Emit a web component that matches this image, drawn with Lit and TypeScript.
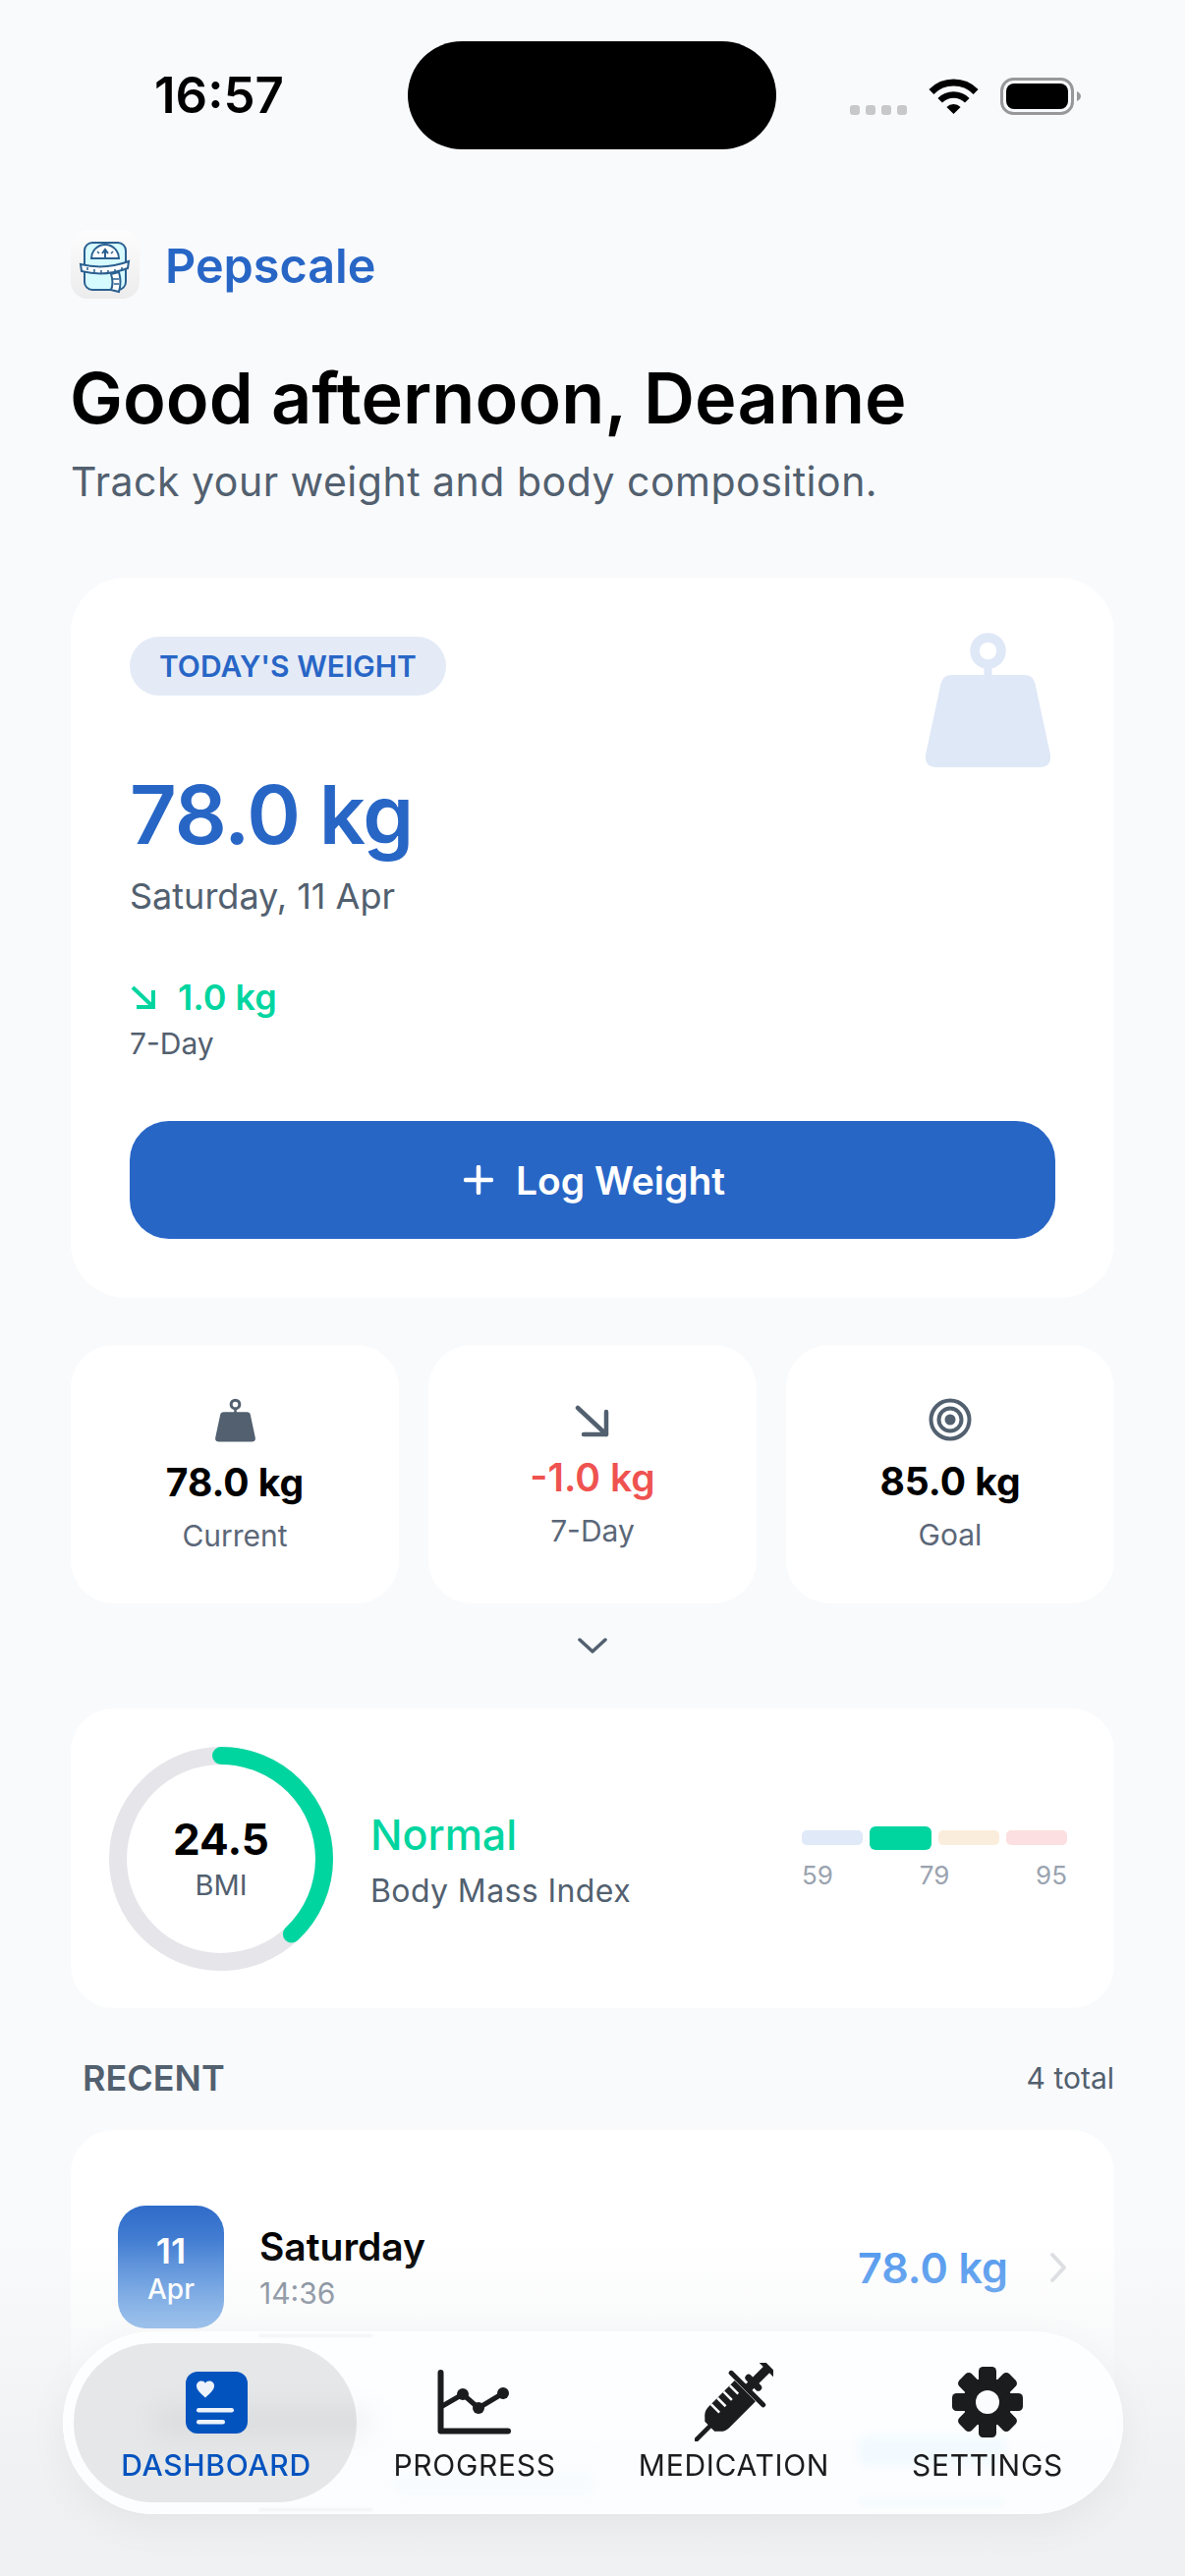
import { LitElement, html, css, svg } from 'lit';
import { customElement } from 'lit/decorators.js';

const weightIcon = (color: string, w: number, h: number) => html`
  <svg width=${w} height=${h} viewBox="0 0 128 137">
    <circle cx="64" cy="18.5" r="13.5" fill="none" stroke=${color} stroke-width="9.5" />
    <rect x="60" y="30" width="8" height="16" fill=${color} />
    <path
      d="M27 43H101Q110 43 112 52L127 122Q130 137 116 137H12Q-2 137 1 122L16 52Q18 43 27 43Z"
      fill=${color}
    />
  </svg>
`;

const dashboardIcon = html`
  <svg width="63" height="63" viewBox="0 0 63 63">
    <rect width="63" height="63" rx="12" fill="#0353bf" />
    <path d="M20 26.5C15 22 11 18.5 11 14.5C11 11 13.500 9.500 16 9.500C17.800 9.500 19.200 10.300 20 11.800C20.800 10.300 22.200 9.500 24 9.500C26.500 9.500 29 11 29 14.500C29 18.500 25 22 20 26.500Z" fill="#eef3fb" />
    <rect x="11" y="37" width="38" height="4.500" rx="2.250" fill="#eef3fb" />
    <rect x="11" y="49" width="29" height="4.500" rx="2.250" fill="#eef3fb" />
  </svg>
`;

const progressIcon = html`
  <svg width="76" height="66" viewBox="0 0 76 66" fill="none" stroke="#1a1c1d" stroke-linecap="round" stroke-linejoin="round">
    <path d="M3.500 3V62.500H72" stroke-width="6" />
    <path d="M3.500 38L26 25L42 39L67 24" stroke-width="5" />
    <circle cx="26" cy="25" r="6" fill="#1a1c1d" stroke="none" />
    <circle cx="42" cy="39" r="6" fill="#1a1c1d" stroke="none" />
    <circle cx="67" cy="24" r="6" fill="#1a1c1d" stroke="none" />
  </svg>
`;

const syringeIcon = html`
  <svg width="80" height="80" viewBox="0 0 80 80" fill="none">
    <g transform="rotate(45 40 40)">
      <path d="M40 94V70" stroke="#1a1c1d" stroke-width="4.500" stroke-linecap="round" />
      <path d="M25 24H55V62Q55 68 50 72L47 75H33L30 72Q25 68 25 62Z" fill="#1a1c1d" />
      <path d="M25 31H37M25 40H37M25 49H37M25 58H37" stroke="#fbfcfd" stroke-width="2.500" />
      <path d="M17 21H63" stroke="#1a1c1d" stroke-width="5" stroke-linecap="round" />
      <path d="M40 20V-8" stroke="#1a1c1d" stroke-width="9" />
      <path d="M27 -9H53" stroke="#1a1c1d" stroke-width="5" stroke-linecap="round" />
      <path d="M33 12H47" stroke="#1a1c1d" stroke-width="7" stroke-linecap="round" />
    </g>
  </svg>
`;

const gearIcon = html`
  <svg width="72" height="72" viewBox="0 0 72 72">
    <circle cx="36" cy="36" r="25" fill="#1a1c1d" />
    ${[0, 45, 90, 135, 180, 225, 270, 315].map(
      a => svg`<rect x="27" y="0" width="18" height="18" rx="4.500" fill="#1a1c1d" transform="rotate(${a} 36 36)" />`,
    )}
    <circle cx="36" cy="36" r="12" fill="#fbfcfd" />
  </svg>
`;

const logoIcon = html`
  <svg width="70" height="70" viewBox="0 0 70 70">
    <defs>
      <linearGradient id="tile" x1="0" y1="0" x2="0" y2="1">
        <stop offset="0" stop-color="#fdfdfd" />
        <stop offset="1" stop-color="#ececec" />
      </linearGradient>
    </defs>
    <rect width="70" height="70" rx="17" fill="url(#tile)" />
    <g stroke="#2b6090" stroke-width="2" fill="none">
      <rect x="14" y="13" width="42" height="48" rx="8" fill="#d6fbff" />
      <path d="M21 29A14 14 0 0 1 49 29Z" fill="#fff" />
      <path d="M35 29V21M32 24L35 20L38 24" />
      <path d="M27 22L29 24M43 22L41 24" stroke-width="1.500" />
      <path d="M10 35Q35 41 59 32L58 39Q35 48 11 42Z" fill="#fff" />
      <path d="M17 38V41M24 40V43M31 41V44M38 41V44M45 40V43M52 38V41" stroke-width="1.500" />
      <path d="M41 45Q44 54 41 61L49 63Q52 53 49 43Z" fill="#fff" />
      <path d="M43 50H49M44 55H49" stroke-width="1.500" />
    </g>
  </svg>
`;

const NAV = [
  { label: 'DASHBOARD', icon: dashboardIcon, active: true },
  { label: 'PROGRESS', icon: progressIcon, active: false },
  { label: 'MEDICATION', icon: syringeIcon, active: false },
  { label: 'SETTINGS', icon: gearIcon, active: false },
];

// smudges of the list row that shows, blurred, through the glass nav
const GHOSTS = [
  { left: 92, top: 74, width: 225, height: 36, color: 'rgba(0, 0, 0, 0.035)', blur: 12 },
  { left: 336, top: 144, width: 206, height: 23, color: 'rgba(130, 200, 255, 0.04)', blur: 6 },
  { left: 809, top: 107, width: 150, height: 30, color: 'rgba(120, 215, 255, 0.07)', blur: 4 },
  { left: 809, top: 169, width: 150, height: 10, color: 'rgba(120, 215, 255, 0.05)', blur: 3 },
  { left: 199, top: 3, width: 117, height: 3, color: 'rgba(0, 0, 0, 0.04)', blur: 1 },
  { left: 199, top: 180, width: 117, height: 3, color: 'rgba(0, 0, 0, 0.04)', blur: 1 },
];

@customElement('app-root')
export class AppRoot extends LitElement {
  static styles = css`
    :host {
      display: block;
      position: relative;
      width: 1206px;
      height: 2622px;
      overflow: hidden;
      background: #f9fafc;
      color: #000;
      font-family: Inter, 'Noto Sans', sans-serif;
    }

    .status {
      display: flex;
      align-items: flex-start;
      height: 110px;
      padding: 42px 0 0 157px;
    }

    .time {
      width: 258px;
      margin-top: 25px;
      font-size: 51px;
      line-height: 60px;
      font-weight: 600;
    }

    .island {
      width: 375px;
      height: 110px;
      border-radius: 55px;
      background: #000;
    }

    .status-icons {
      display: flex;
      align-items: flex-end;
      height: 75px;
      margin-left: 75px;
    }

    .dots {
      display: flex;
      gap: 6px;
      margin-right: 22px;
    }

    .dots span {
      width: 10px;
      height: 10px;
      border-radius: 3px;
      background: #c8c8ca;
    }

    .battery {
      margin-left: 22px;
    }

    .page {
      padding: 82px 72px 0;
    }

    .brand {
      display: flex;
      align-items: center;
      gap: 26px;
      height: 70px;
      font-size: 48.500px;
      font-weight: 600;
      color: #2866c6;
    }

    .brand span {
      margin-top: 2px;
    }

    h1 {
      margin: 58px 0 0 -1px;
      font-size: 72px;
      line-height: 86px;
      font-weight: 600;
      letter-spacing: 0.05px;
    }

    .sub {
      margin-top: 17px;
      font-size: 41px;
      line-height: 50px;
      letter-spacing: 0.5px;
      color: #52606f;
    }

    .card {
      background: #fff;
    }

    .hero {
      position: relative;
      margin-top: 73px;
      padding: 60px 60px 60px;
      border-radius: 56px;
    }

    .badge {
      display: inline-flex;
      align-items: center;
      height: 60px;
      padding: 0 30px;
      border-radius: 30px;
      background: #e4ebf7;
      color: #2866c6;
      font-size: 30px;
      font-weight: 600;
    }

    .weight-art {
      position: absolute;
      top: 56px;
      right: 64px;
    }

    .big {
      margin-top: 71px;
      font-size: 83px;
      line-height: 100px;
      font-weight: 600;
      letter-spacing: -1px;
      color: #2866c6;
    }

    .date {
      margin-top: 11px;
      font-size: 36px;
      line-height: 44px;
      color: #52606f;
    }

    .delta {
      display: flex;
      align-items: center;
      gap: 21px;
      margin-top: 60px;
      font-size: 36px;
      line-height: 42px;
      font-weight: 600;
      color: #00d5a0;
    }

    .delta-label {
      margin-top: 8px;
      font-size: 30px;
      line-height: 36px;
      color: #52606f;
    }

    .log {
      display: flex;
      align-items: center;
      justify-content: center;
      gap: 23px;
      height: 120px;
      margin-top: 61px;
      padding-left: 4px;
      border-radius: 40px;
      background: #2866c6;
      color: #fff;
      font-size: 39px;
      font-weight: 600;
    }

    .stats {
      display: grid;
      grid-template-columns: repeat(3, 1fr);
      gap: 30px;
      margin-top: 48px;
    }

    .stat {
      display: flex;
      flex-direction: column;
      align-items: center;
      height: 263px;
      box-sizing: border-box;
      padding-top: 54px;
      border-radius: 44px;
    }

    .stat-icon {
      display: flex;
      align-items: center;
    }

    .stat-value {
      margin-top: 18px;
      font-size: 39px;
      line-height: 46px;
      font-weight: 700;
    }

    .stat-value.down {
      color: #ef5350;
      font-weight: 600;
    }

    .stat-label {
      margin-top: 13px;
      font-size: 30px;
      line-height: 36px;
      color: #5b6778;
    }

    .toggle {
      display: flex;
      justify-content: center;
      height: 72px;
      padding-top: 35px;
    }

    .bmi {
      display: flex;
      align-items: center;
      height: 305px;
      padding: 0 48px 0 39px;
      border-radius: 44px;
    }

    .ring {
      position: relative;
      width: 228px;
      height: 228px;
    }

    .ring-text {
      position: absolute;
      inset: 0;
      display: flex;
      flex-direction: column;
      align-items: center;
      justify-content: center;
    }

    .ring-value {
      font-size: 44px;
      line-height: 50px;
      font-weight: 700;
    }

    .ring-label {
      margin-top: 4px;
      font-size: 29px;
      line-height: 36px;
      color: #52606f;
    }

    .bmi-text {
      flex: 1;
      margin-left: 38px;
    }

    .bmi-status {
      margin-top: 3px;
      font-size: 43px;
      line-height: 52px;
      font-weight: 500;
      color: #00d5a0;
    }

    .bmi-name {
      margin-top: 12px;
      font-size: 32px;
      line-height: 40px;
      letter-spacing: 0.4px;
      color: #52606f;
    }

    .scale {
      width: 270px;
    }

    .bars {
      display: flex;
      align-items: center;
      gap: 7px;
      height: 24px;
    }

    .bars span {
      flex: 1;
      height: 15px;
      border-radius: 5px;
    }

    .bars .now {
      height: 24px;
      border-radius: 6px;
      background: #00d5a0;
    }

    .marks {
      display: flex;
      justify-content: space-between;
      margin-top: 10px;
      font-size: 26px;
      line-height: 32px;
      color: #9aa3af;
    }

    .recent {
      display: flex;
      align-items: center;
      justify-content: space-between;
      height: 44px;
      margin-top: 49px;
      padding-left: 12px;
      font-size: 30px;
      color: #52606f;
    }

    .recent b {
      font-size: 36px;
      font-weight: 600;
    }

    .list {
      margin-top: 31px;
      padding: 47px 48px 0;
      height: 600px;
      border-radius: 44px;
    }

    .row {
      display: flex;
      align-items: center;
      height: 185px;
      box-sizing: border-box;
    }

    .tile {
      display: flex;
      flex-direction: column;
      align-items: center;
      justify-content: center;
      width: 108px;
      height: 125px;
      border-radius: 28px;
      background: linear-gradient(#2f6cc9, #75abe9);
      color: #fff;
    }

    .tile b {
      font-size: 36px;
      line-height: 44px;
      font-weight: 600;
    }

    .tile span {
      font-size: 28px;
      line-height: 34px;
      font-weight: 500;
    }

    .row-main {
      flex: 1;
      margin-left: 36px;
    }

    .row-name {
      font-size: 39px;
      line-height: 46px;
      font-weight: 600;
    }

    .row-time {
      margin-top: 6px;
      font-size: 30px;
      line-height: 36px;
      color: #7b8694;
    }

    .row-value {
      font-size: 43px;
      font-weight: 600;
      color: #4f97ee;
    }

    .row-chevron {
      margin-left: 42px;
    }

    .rule {
      height: 2px;
      margin-left: 145px;
      background: #e6e8ea;
    }

    .fade {
      position: absolute;
      left: 0;
      right: 0;
      top: 2280px;
      bottom: 0;
      background: linear-gradient(rgba(240, 241, 243, 0), rgba(238, 240, 242, 0.96) 75%);
    }

    .nav {
      position: absolute;
      left: 64px;
      top: 2373px;
      display: grid;
      grid-template-columns: 312px 214px 314px 202px;
      width: 1079px;
      height: 186px;
      box-sizing: border-box;
      padding-top: 32px;
      border-radius: 93px;
      background: rgba(253, 254, 255, 0.92);
      -webkit-backdrop-filter: blur(6px);
      backdrop-filter: blur(6px);
      box-shadow:
        inset 0 0 0 1px rgba(255, 255, 255, 0.7),
        0 12px 40px rgba(0, 0, 0, 0.05);
    }

    .pill {
      position: absolute;
      left: 11px;
      top: 12px;
      width: 288px;
      height: 162px;
      border-radius: 81px;
      background: rgba(223, 224, 226, 0.78);
    }

    .ghost {
      position: absolute;
      border-radius: 6px;
    }

    .nav-item {
      position: relative;
      display: flex;
      flex-direction: column;
      align-items: center;
      font-size: 30px;
      line-height: 36px;
      font-weight: 400;
      letter-spacing: 0.7px;
      color: #1a1c1d;
    }

    .nav-item.active {
      color: #0353bf;
      font-weight: 500;
    }

    .nav-icon {
      display: flex;
      align-items: center;
      justify-content: center;
      height: 80px;
      margin-bottom: 6px;
    }
  `;

  render() {
    return html`
      <div class="status">
        <div class="time">16:57</div>
        <div class="island"></div>
        <div class="status-icons">
          <div class="dots"><span></span><span></span><span></span><span></span></div>
          <svg width="51" height="38" viewBox="0 0 51 38">
            <path d="M2.900 14.400A32 32 0 0 1 48.100 14.400" fill="none" stroke="#000" stroke-width="7" />
            <path d="M11.700 23.200A19.500 19.500 0 0 1 39.300 23.200" fill="none" stroke="#000" stroke-width="6.500" />
            <path d="M25.500 37L18.400 29.900A10 10 0 0 1 32.600 29.900Z" />
          </svg>
          <svg class="battery" width="82" height="38" viewBox="0 0 82 38">
            <rect x="1.500" y="1.500" width="72" height="35" rx="12" fill="none" stroke="#98989a" stroke-width="3" />
            <rect x="6" y="6" width="63" height="26" rx="8" />
            <path d="M78 14Q82 16 82 19Q82 22 78 24Z" fill="#98989a" />
          </svg>
        </div>
      </div>

      <div class="page">
        <div class="brand">${logoIcon}<span>Pepscale</span></div>
        <h1>Good afternoon, Deanne</h1>
        <div class="sub">Track your weight and body composition.</div>

        <div class="card hero">
          <div class="badge">TODAY'S WEIGHT</div>
          <div class="weight-art">${weightIcon('#dfe8f6', 129, 137)}</div>
          <div class="big">78.0 kg</div>
          <div class="date">Saturday, 11 Apr</div>
          <div class="delta">
            <svg width="28" height="24" viewBox="0 0 28 24" fill="none" stroke="#00d5a0" stroke-width="4">
              <path d="M3 2L22 20M24 5V22H7" />
            </svg>
            <span>1.0 kg</span>
          </div>
          <div class="delta-label">7-Day</div>
          <div class="log">
            <svg width="30" height="30" viewBox="0 0 30 30" stroke="#fff" stroke-width="4.500" stroke-linecap="round">
              <path d="M15 2V28M2 15H28" />
            </svg>
            <span>Log Weight</span>
          </div>
        </div>

        <div class="stats">
          <div class="card stat">
            <div class="stat-icon">${weightIcon('#52606f', 41, 45)}</div>
            <div class="stat-value">78.0 kg</div>
            <div class="stat-label">Current</div>
          </div>
          <div class="card stat">
            <div class="stat-icon">
              <svg width="36" height="40" viewBox="0 0 36 40" fill="none" stroke="#52606f" stroke-width="4.500" stroke-linecap="round" stroke-linejoin="round">
                <path d="M3 10L32 37M32 14V37H9" />
              </svg>
            </div>
            <div class="stat-value down">-1.0 kg</div>
            <div class="stat-label">7-Day</div>
          </div>
          <div class="card stat">
            <div class="stat-icon">
              <svg width="44" height="44" viewBox="0 0 44 44" fill="none" stroke="#52606f" stroke-width="4">
                <circle cx="22" cy="22" r="19.500" />
                <circle cx="22" cy="22" r="11.500" />
                <circle cx="22" cy="22" r="5.500" fill="#52606f" stroke="none" />
              </svg>
            </div>
            <div class="stat-value">85.0 kg</div>
            <div class="stat-label">Goal</div>
          </div>
        </div>

        <div class="toggle">
          <svg width="30" height="16" viewBox="0 0 30 16" fill="none" stroke="#52606f" stroke-width="3.500" stroke-linecap="round" stroke-linejoin="round">
            <path d="M2 2L15 14L28 2" />
          </svg>
        </div>

        <div class="card bmi">
          <div class="ring">
            <svg width="228" height="228" viewBox="0 0 228 228" fill="none" stroke-width="18">
              <circle cx="114" cy="114" r="105" stroke="#e5e5ea" />
              <circle
                cx="114"
                cy="114"
                r="105"
                stroke="#00d5a0"
                stroke-linecap="round"
                pathLength="100"
                stroke-dasharray="38 100"
                transform="rotate(-90 114 114)"
              />
            </svg>
            <div class="ring-text">
              <div class="ring-value">24.5</div>
              <div class="ring-label">BMI</div>
            </div>
          </div>
          <div class="bmi-text">
            <div class="bmi-status">Normal</div>
            <div class="bmi-name">Body Mass Index</div>
          </div>
          <div class="scale">
            <div class="bars">
              <span style="background:#e0e9f7"></span>
              <span class="now"></span>
              <span style="background:#fbeddb"></span>
              <span style="background:#fcdfe0"></span>
            </div>
            <div class="marks"><span>59</span><span>79</span><span>95</span></div>
          </div>
        </div>

        <div class="recent"><b>RECENT</b><span>4 total</span></div>

        <div class="card list">
          <div class="row">
            <div class="tile"><b>11</b><span>Apr</span></div>
            <div class="row-main">
              <div class="row-name">Saturday</div>
              <div class="row-time">14:36</div>
            </div>
            <div class="row-value">78.0 kg</div>
            <svg class="row-chevron" width="18" height="32" viewBox="0 0 18 32" fill="none" stroke="#dcdde0" stroke-width="4" stroke-linecap="round" stroke-linejoin="round">
              <path d="M3 3L15 16L3 29" />
            </svg>
          </div>
          <div class="rule"></div>
          <div class="row"></div>
          <div class="rule"></div>
        </div>
      </div>

      <div class="fade"></div>

      <nav class="nav">
        <div class="pill"></div>
        ${GHOSTS.map(
          g => html`<div
            class="ghost"
            style="left:${g.left}px;top:${g.top}px;width:${g.width}px;height:${g.height}px;background:${g.color};filter:blur(${g.blur}px)"
          ></div>`,
        )}
        ${NAV.map(
          n => html`
            <div class="nav-item ${n.active ? 'active' : ''}">
              <div class="nav-icon">${n.icon}</div>
              <span>${n.label}</span>
            </div>
          `,
        )}
      </nav>
    `;
  }
}
